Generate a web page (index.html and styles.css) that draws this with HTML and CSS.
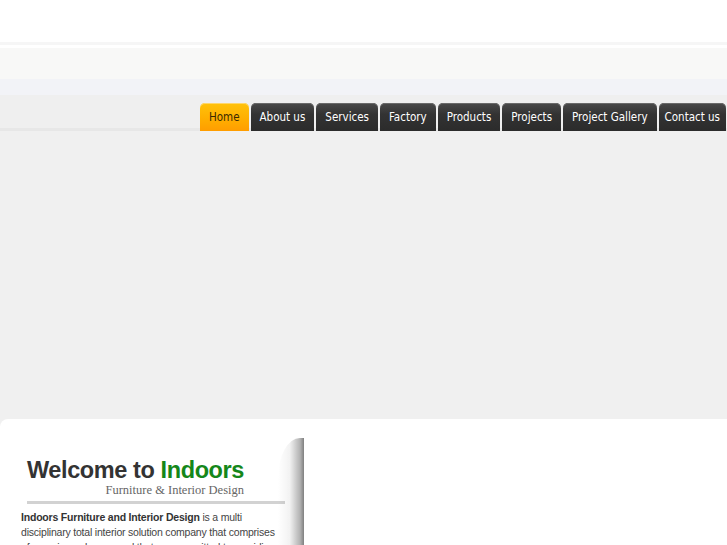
FILE: index.html
```html
<!DOCTYPE html>
<html>
<head>
<meta charset="utf-8">
<title>Indoors Furniture &amp; Interior Design</title>
<link rel="stylesheet" href="styles.css">
</head>
<body>
<div class="top"></div>
<div class="rule"></div>
<div class="gap"></div>
<div class="band"></div>
<div class="band-blue"></div>
<div class="navbar">
  <ul class="nav">
    <li class="tab active">Home</li>
    <li class="tab">About us</li>
    <li class="tab">Services</li>
    <li class="tab">Factory</li>
    <li class="tab">Products</li>
    <li class="tab">Projects</li>
    <li class="tab">Project Gallery</li>
    <li class="tab last">Contact us</li>
  </ul>
</div>
<div class="banner"></div>
<div class="panel">
  <div class="intro">
    <div class="welcome">
      <h1 class="title">Welcome to <span class="green">Indoors</span></h1>
      <div class="subtitle">Furniture &amp; Interior Design</div>
    </div>
    <p class="text"><b>Indoors Furniture and Interior Design</b> is a multi disciplinary total interior solution company that comprises of experienced personnel that are committed to providing</p>
    <div class="curl"></div>
  </div>
  <div class="main"></div>
</div>
</body>
</html>
```

FILE: styles.css
```css
html, body {
  margin: 0;
  padding: 0;
  background: #f0f0f0;
  overflow: hidden;
  height: 545px;
}
.top { height: 42px; background: #ffffff; }
.rule { height: 3px; background: #f6f6f6; }
.gap { height: 3px; background: #ffffff; }
.band { height: 31px; background: #f8f8f7; }
.band-blue { height: 16px; background: #f2f3f7; }
.navbar {
  height: 33px;
  background: #efefef;
  border-bottom: 3px solid #e7e7e7;
  display: flex;
  justify-content: flex-end;
  align-items: flex-end;
  padding-right: 1px;
}
.nav {
  list-style: none;
  margin: 0 0 -3px 0;
  padding: 0;
  display: flex;
  gap: 2px;
}
.tab {
  height: 28px;
  line-height: 28px;
  padding: 0 9px;
  font-family: "DejaVu Sans Condensed", "DejaVu Sans", sans-serif;
  font-stretch: condensed;
  font-size: 11.5px;
  color: #ffffff;
  background: linear-gradient(#4a4a4a, #333333 40%, #2b2b2b);
  border-radius: 5px 5px 0 0;
  box-shadow: inset 0 1px 0 #6a6a6a;
  white-space: nowrap;
}
.tab.last { padding: 0 6px; }
.tab.active {
  color: #3a2a00;
  background: linear-gradient(#ffc20a, #ffad00 60%, #ff9d00);
  box-shadow: inset 0 1px 0 #ffd76a;
}
.banner { height: 288px; background: #f0f0f0; }
.panel {
  background: #ffffff;
  border-radius: 8px 0 0 0;
  display: flex;
  height: 126px;
  overflow: hidden;
}
.intro {
  position: relative;
  width: 304px;
  box-sizing: border-box;
  padding: 38px 0 0 21px;
}
.welcome {
  width: 258px;
  margin-left: 6px;
  border-bottom: 3px solid #d2d2d2;
  padding-bottom: 4px;
}
.title {
  margin: 0;
  font-family: "Liberation Sans", Arial, sans-serif;
  font-weight: bold;
  font-size: 23.5px;
  line-height: 26px;
  color: #333333;
  letter-spacing: -0.4px;
}
.green { color: #15871a; }
.subtitle {
  font-family: "Liberation Serif", "Times New Roman", serif;
  font-size: 12.5px;
  line-height: 14px;
  color: #666666;
  text-align: right;
  padding-right: 41px;
}
.text {
  margin: 6px 0 0 0;
  width: 262px;
  font-family: "Liberation Sans", Arial, sans-serif;
  font-size: 10.5px;
  line-height: 15px;
  letter-spacing: -0.2px;
  color: #444444;
}
.text b { color: #333333; }
.curl {
  position: absolute;
  right: 0;
  top: 19px;
  bottom: 0;
  width: 26px;
  border-top-left-radius: 22px 40px;
  background: linear-gradient(to right, rgba(0,0,0,0), rgba(0,0,0,0.05) 45%, rgba(0,0,0,0.3) 85%, rgba(0,0,0,0.5));
}
.main { flex: 1; }
```
